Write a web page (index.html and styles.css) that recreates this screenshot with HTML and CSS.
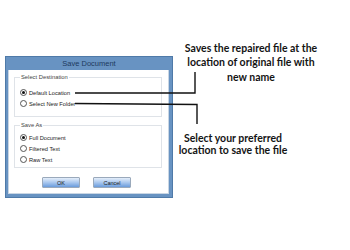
FILE: index.html
```html
<!DOCTYPE html>
<html lang="en">
<head>
    <meta charset="UTF-8">
    <title>Save Document</title>
    <link rel="stylesheet" href="styles.css">
</head>
<body>

    <div class="dialog">
        <div class="title">Save Document</div>
        <div class="dialog-body">
            <fieldset class="group group-dest">
                <legend>Select Destination</legend>
                <div class="opt"><span class="radio on"></span>Default Location</div>
                <div class="opt"><span class="radio"></span>Select New Folder</div>
            </fieldset>
            <fieldset class="group group-save">
                <legend>Save As</legend>
                <div class="opt"><span class="radio on"></span>Full Document</div>
                <div class="opt"><span class="radio"></span>Filtered Text</div>
                <div class="opt"><span class="radio"></span>Raw Text</div>
            </fieldset>
            <div class="buttons">
                <button class="btn">OK</button>
                <button class="btn">Cancel</button>
            </div>
        </div>
    </div>

    <div class="notes">
        <p class="note note-top">Saves the repaired file at the<br>location of original file with<br>new name</p>
        <p class="note note-bottom">Select your preferred<br>location to save the file</p>
    </div>

    <!-- leader lines from the options to the notes -->
    <svg class="leaders" width="350" height="250" viewBox="0 0 350 250">
        <polyline points="75,93 195,93 195,72" />
        <polyline points="75,103.5 197,104.5 197,124" />
    </svg>

</body>
</html>
```

FILE: styles.css
```css
body {
    margin: 0;
    width: 350px;
    height: 250px;
    background-color: #fff;
    display: flex;
    align-items: flex-start;
    padding: 41px 0 0 5px;
    box-sizing: border-box;
    position: relative;
    font-family: "Liberation Sans", Arial, sans-serif;
}
.dialog {
    margin-top: 15px;
    width: 168px;
    height: 142px;
    box-sizing: border-box;
    background-color: #6893c2;
    border: 1px solid #4f7aa8;
    display: flex;
    flex-direction: column;
}
.title {
    height: 13px;
    line-height: 13px;
    text-align: center;
    font-size: 7.5px;
    color: #1e3a60;
}
.dialog-body {
    flex: 1;
    margin: 0 3px 3px 2px;
    background-color: #fff;
    border: 1px solid #c9d6e4;
    border-top: none;
    padding: 4px 6px 0 5px;
}
.group {
    margin: 0;
    min-width: 0;
    border: 1px solid #dfe3e8;
    padding: 6px 0 7px 5px;
}
.group legend {
    font-size: 5.8px;
    line-height: 7px;
    color: #444;
    padding: 0 1px;
}
.group-save {
    margin-top: 5px;
    padding-top: 3px;
    padding-bottom: 2px;
}
.opt {
    height: 11px;
    display: flex;
    align-items: center;
    font-size: 5.7px;
    color: #222;
}
.radio {
    width: 5px;
    height: 5px;
    border: 1px solid #555;
    border-radius: 50%;
    margin-right: 2px;
    display: flex;
    align-items: center;
    justify-content: center;
    background-color: #fff;
}
.radio.on::after {
    content: "";
    width: 3px;
    height: 3px;
    border-radius: 50%;
    background-color: #111;
}
.buttons {
    display: flex;
    gap: 13px;
    padding-left: 28px;
    margin-top: 9px;
}
.btn {
    width: 38px;
    height: 11px;
    padding: 0;
    font-family: inherit;
    font-size: 5.5px;
    color: #222;
    border: 1px solid #9aa9bb;
    border-radius: 1px;
    background: linear-gradient(#e4eefa, #a9c7ee 50%, #6a9cdc);
}
.notes {
    display: flex;
    flex-direction: column;
}
.note {
    margin: 0;
    text-align: center;
    font-family: Lato, "Liberation Sans", sans-serif;
    font-weight: bold;
    font-size: 10.5px;
    line-height: 14.3px;
    color: #141414;
}
.note-top {
    margin-left: 3px;
    width: 150px;
}
.note-bottom {
    width: 120px;
    margin-top: 48px;
    line-height: 12.5px;
}
.leaders {
    position: absolute;
    left: 0;
    top: 0;
    pointer-events: none;
}
.leaders polyline {
    fill: none;
    stroke: #111;
    stroke-width: 1.4;
}
```
